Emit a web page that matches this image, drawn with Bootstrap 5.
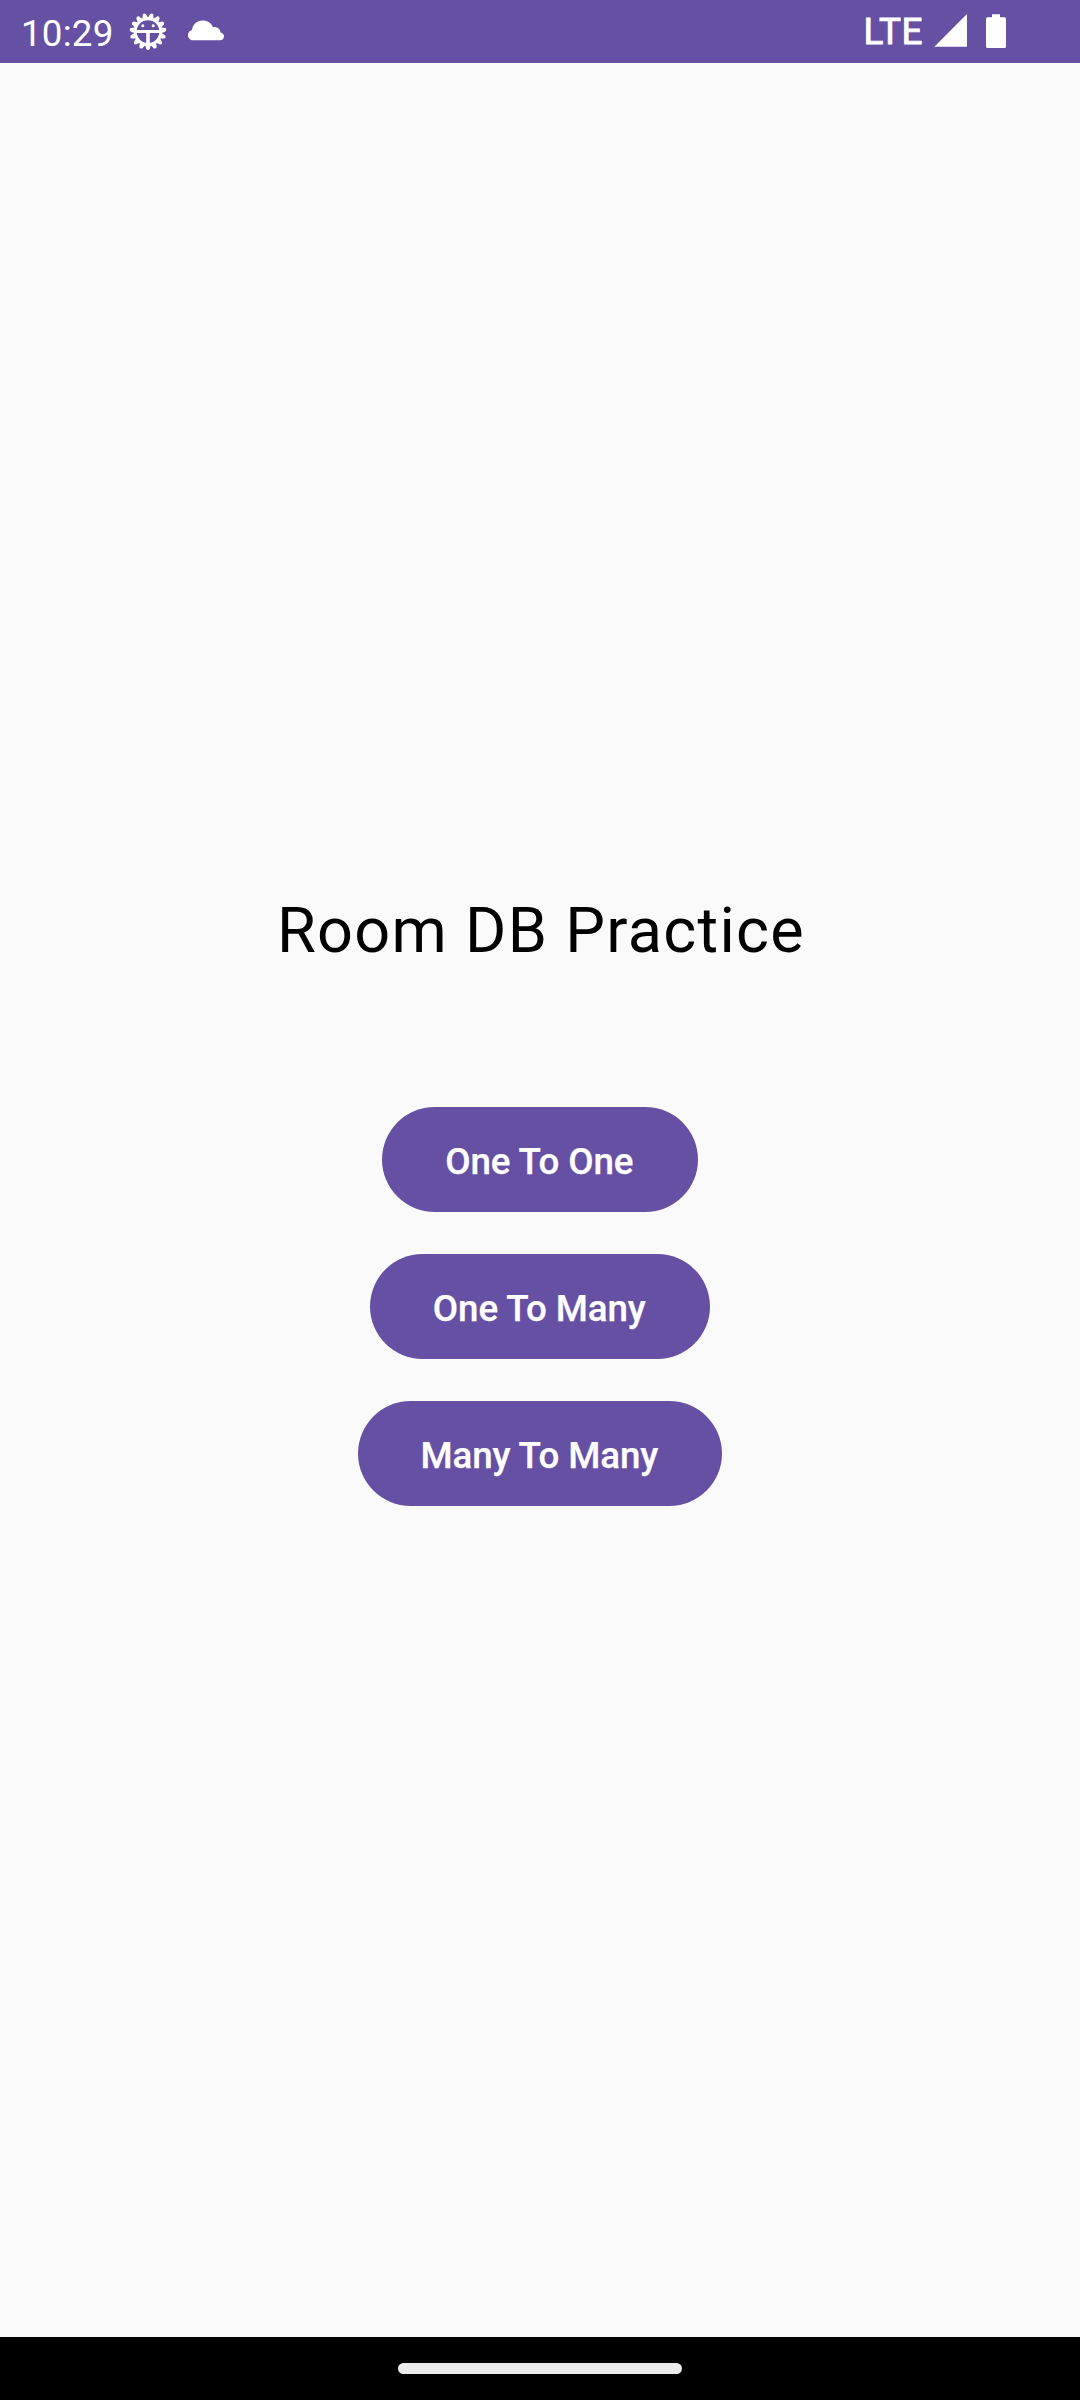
<!DOCTYPE html>
<html lang="en">
<head>
<meta charset="utf-8">
<meta name="viewport" content="width=device-width, initial-scale=1">
<title>Room DB Practice</title>
<link href="https://cdn.jsdelivr.net/npm/bootstrap@5.3.0/dist/css/bootstrap.min.css" rel="stylesheet">
<style>
body{font-family:Roboto,sans-serif;background:#fafafa}
.screen{height:2400px}
.status-bar{height:63px;background:#6650a4;color:#fff;font-size:36.75px;line-height:63px}
.status-bar svg{fill:#fff;flex:none}
.clock{margin-left:21px;width:107px;line-height:67px;letter-spacing:.2px}
.cloud-icon{margin-left:20px}
.network{width:70.5px;-webkit-text-stroke:.9px #fff;letter-spacing:.6px}
.signal-icon{margin-right:19px}
.battery-icon{margin-right:74px}
.screen-title{font-size:63px;line-height:74px;letter-spacing:1.3125px;color:#000;margin-bottom:139px;padding-left:2px}
.btn-room{--bs-btn-color:#fff;--bs-btn-bg:#6650a4;--bs-btn-hover-color:#fff;--bs-btn-hover-bg:#5a4693;--bs-btn-border-width:0;--bs-btn-padding-y:0;--bs-btn-font-size:36.75px;--bs-btn-font-weight:500;height:105px;padding:4px 64.2px 0 62.8px;line-height:101px;letter-spacing:-.1px;-webkit-text-stroke:.25px #fff}
.choices{gap:42px}
.gesture-bar{height:63px;background:#000}
.gesture-pill{width:284px;height:11px;background:#ebebeb}
</style>
</head>
<body>
<div class="screen d-flex flex-column">
  <header class="status-bar d-flex align-items-start">
    <span class="clock">10:29</span>
    <svg width="40" height="63" viewBox="-20 -31.6 40 63" aria-hidden="true">
      <defs><path id="tooth" d="M-3 13-1.7 17.5Q0 19.4 1.7 17.5L3 13Z"/></defs>
      <circle r="12.8" fill="none" stroke="#fff" stroke-width="2.9"/>
      <use href="#tooth"/><use href="#tooth" transform="rotate(24)"/><use href="#tooth" transform="rotate(48)"/><use href="#tooth" transform="rotate(72)"/><use href="#tooth" transform="rotate(96)"/><use href="#tooth" transform="rotate(120)"/><use href="#tooth" transform="rotate(144)"/><use href="#tooth" transform="rotate(168)"/><use href="#tooth" transform="rotate(192)"/><use href="#tooth" transform="rotate(216)"/><use href="#tooth" transform="rotate(240)"/><use href="#tooth" transform="rotate(264)"/><use href="#tooth" transform="rotate(288)"/><use href="#tooth" transform="rotate(312)"/><use href="#tooth" transform="rotate(336)"/>
      <path d="M-12-1.7H12V1.3H1.8V12.5H-1.8V1.3H-12Z"/>
      <circle cx="-5.2" cy="-5.9" r="1.5"/><circle cx="5.2" cy="-5.9" r="1.5"/>
    </svg>
    <svg class="cloud-icon" width="36" height="63" viewBox="0 -20 36 63" aria-hidden="true">
      <path d="M5.2 20.3C2.2 20.3 0 18 0 15.2 0 12.6 1.7 10.6 4 10.1 4.4 4.5 9 .4 14.6 .4 19.4 .4 23.4 3.1 25 7.2 28.9 6.6 32.2 9 32.5 12.4 34.6 12.7 36 14.4 36 16.4 36 18.6 34.3 20.3 32 20.3Z"/>
    </svg>
    <span class="network ms-auto">LTE</span>
    <svg class="signal-icon" width="33" height="63" viewBox="0 0 33 63" aria-hidden="true"><path d="M.3 46.8 33 14V46.8Z"/></svg>
    <svg class="battery-icon" width="20" height="63" viewBox="0 0 20 63" aria-hidden="true"><path d="M6 14.2H14V17.2H18.5Q20 17.2 20 18.7V46.4Q20 47.9 18.5 47.9H1.5Q0 47.9 0 46.4V18.7Q0 17.2 1.5 17.2H6Z"/></svg>
  </header>
  <main class="flex-grow-1 d-flex flex-column align-items-center justify-content-center">
    <h1 class="screen-title fw-normal">Room DB Practice</h1>
    <div class="choices d-flex flex-column align-items-center">
      <button type="button" class="btn btn-room rounded-pill">One To One</button>
      <button type="button" class="btn btn-room rounded-pill">One To Many</button>
      <button type="button" class="btn btn-room rounded-pill">Many To Many</button>
    </div>
  </main>
  <footer class="gesture-bar d-flex align-items-center justify-content-center"><div class="gesture-pill rounded-pill"></div></footer>
</div>
<script src="https://cdn.jsdelivr.net/npm/bootstrap@5.3.0/dist/js/bootstrap.bundle.min.js"></script>
</body>
</html>
